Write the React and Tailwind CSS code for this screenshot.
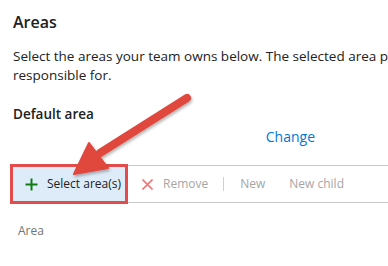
import React from 'react';

const font = { fontFamily: '"Open Sans", "Noto Sans", sans-serif' };

const App = () => {
    return (
        <div className="relative w-[388px] h-[266px] overflow-hidden bg-white text-[#212121]" style={font}>
            <div className="pl-[13px] pt-[12px]">
                <h2 className="text-[16px] leading-[20px] font-semibold">Areas</h2>
                <p className="mt-[15px] text-[13.5px] leading-[19px] whitespace-nowrap">
                    Select the areas your team owns below. The selected area paths will be
                    <br />
                    responsible for.
                </p>
                <h3 className="mt-[20px] text-[13.5px] leading-[18px] font-semibold">Default area</h3>
                <div className="flex justify-end pr-[73px] mt-[5px]">
                    <span className="text-[14px] leading-[18px] text-[#0078d4]">Change</span>
                </div>
            </div>

            <div className="mt-[18px] flex items-stretch h-[40px]">
                <div className="ml-[10px] shrink-0 whitespace-nowrap flex items-center gap-[9px] pl-[12px] w-[118px] bg-[#deecf9] border-[3px] border-[#e44b4b] text-[12px]">
                    <svg width="13" height="13" viewBox="0 0 13 13">
                        <path d="M6.5 0.5v12M0.5 6.5h12" stroke="#107c10" strokeWidth="2" />
                    </svg>
                    <span>Select area(s)</span>
                </div>
                <div className="flex-1 whitespace-nowrap flex items-center border-y border-[#c8c8c8] my-[1px] text-[12px] text-[#a6a6a6]">
                    <svg className="ml-[14px]" width="11" height="11" viewBox="0 0 11 11">
                        <path d="M0.5 0.5l10 10M10.5 0.5l-10 10" stroke="#e87a7a" strokeWidth="1.6" />
                    </svg>
                    <span className="ml-[10px]">Remove</span>
                    <span className="ml-[15px] h-[14px] w-px bg-[#d0d0d0]" />
                    <span className="ml-[16px]">New</span>
                    <span className="ml-[24px]">New child</span>
                </div>
            </div>

            <div className="pl-[18px] mt-[18px] text-[12px] text-[#737373]">Area</div>

            <svg className="absolute left-0 top-0" width="388" height="266" viewBox="0 0 388 266">
                <defs>
                    <filter id="sh" x="-20%" y="-20%" width="140%" height="140%">
                        <feDropShadow dx="1" dy="2" stdDeviation="1.5" floodColor="#000" floodOpacity="0.3" />
                    </filter>
                </defs>
                <g filter="url(#sh)">
                    <line x1="187" y1="98" x2="100" y2="153" stroke="#e0463e" strokeWidth="8" strokeLinecap="round" />
                    <polygon points="74,174 89,143 108,168" fill="#e0463e" stroke="#e0463e" strokeWidth="2" strokeLinejoin="round" />
                </g>
            </svg>
        </div>
    );
};

export default App;
